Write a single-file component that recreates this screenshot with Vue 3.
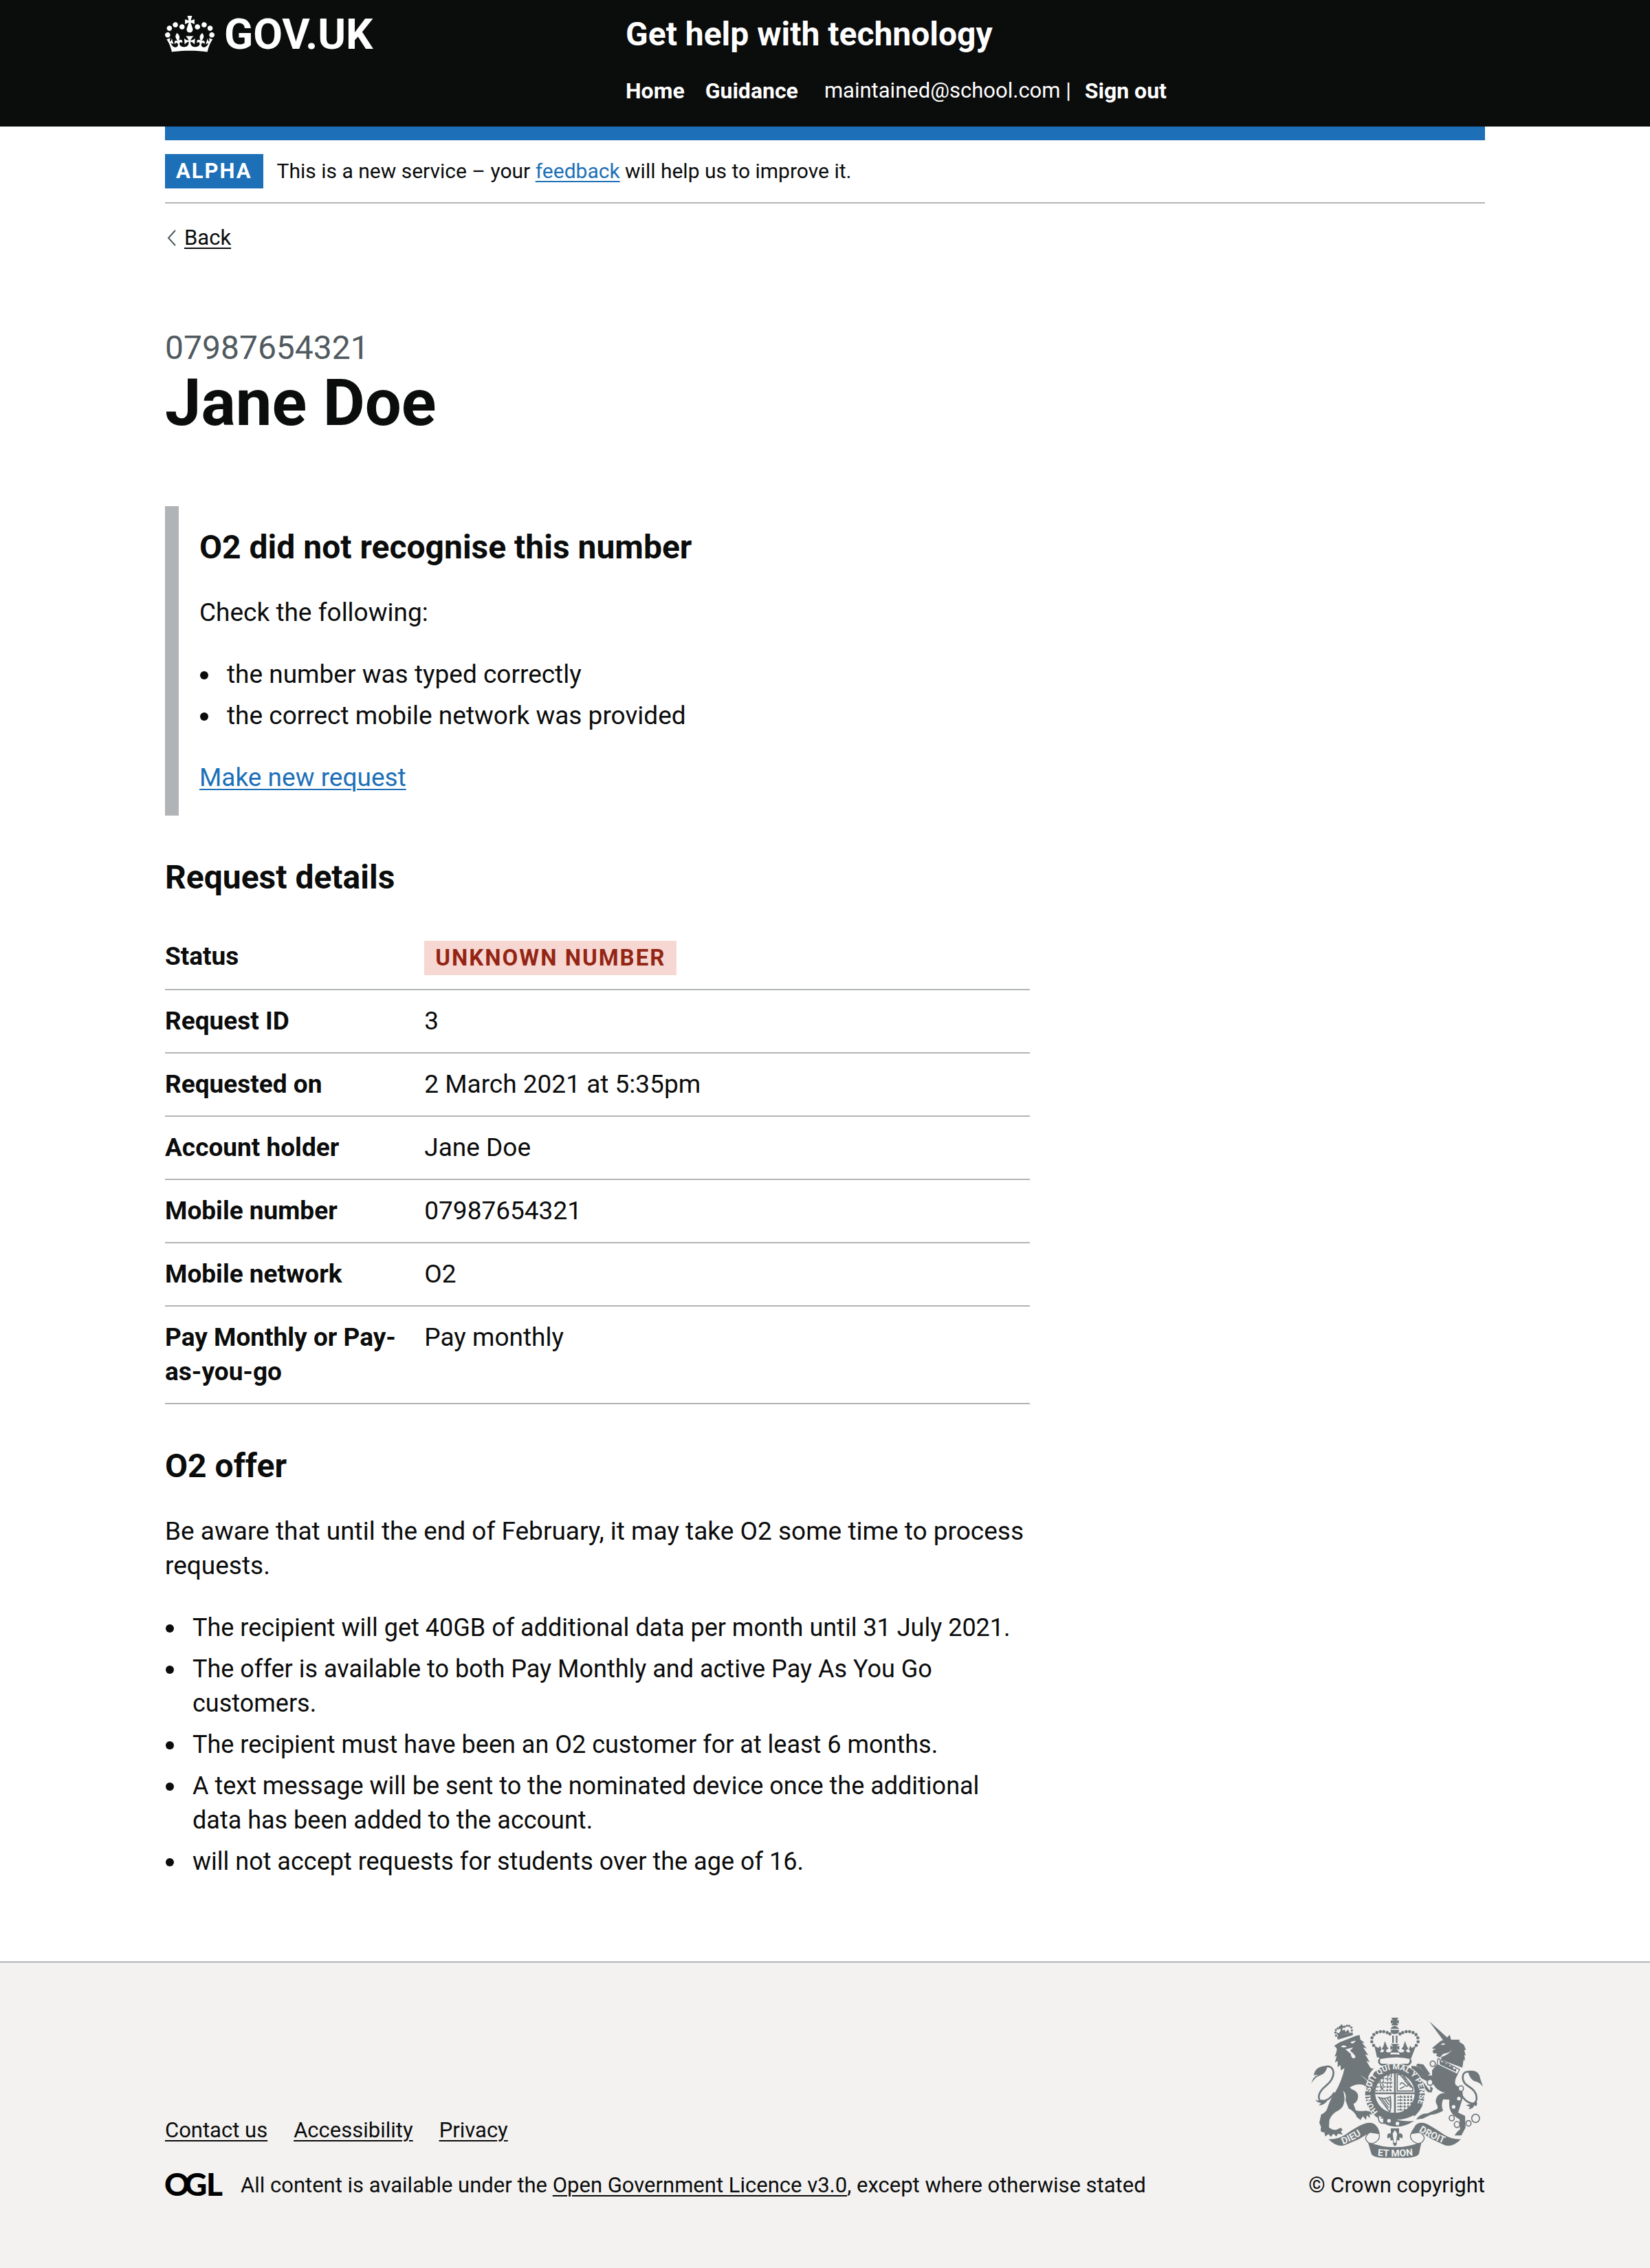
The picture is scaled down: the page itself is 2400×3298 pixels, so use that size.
<script setup>
const details = [
  { key: 'Status', value: 'Unknown number', tag: true },
  { key: 'Request ID', value: '3' },
  { key: 'Requested on', value: '2 March 2021 at 5:35pm' },
  { key: 'Account holder', value: 'Jane Doe' },
  { key: 'Mobile number', value: '07987654321' },
  { key: 'Mobile network', value: 'O2' },
  { key: 'Pay Monthly or Pay-as-you-go', value: 'Pay monthly' },
]
const checks = ['the number was typed correctly', 'the correct mobile network was provided']
const offer = [
  'The recipient will get 40GB of additional data per month until 31 July 2021.',
  'The offer is available to both Pay Monthly and active Pay As You Go customers.',
  'The recipient must have been an O2 customer for at least 6 months.',
  'A text message will be sent to the nominated device once the additional data has been added to the account.',
  'will not accept requests for students over the age of 16.',
]
const footerLinks = ['Contact us', 'Accessibility', 'Privacy']

// Crest details: pearls on the crowns and links of the chain
const arch = [
  [405, 223], [397, 207], [398, 190], [406, 176], [419, 167], [434, 163], [449, 163], [464, 167], [476, 173],
]
const pearls = [
  [241, 180], [238, 167], [240, 156], [248, 149], [257, 147], [279, 141], [289, 137], [299, 138], [308, 145], [310, 158],
]
const chain = [[663, 303, 12], [651, 384, 13], [786, 411, 12], [746, 540, 12], [769, 568, 13], [819, 563, 12], [850, 541, 18]]
</script>

<template>
  <div class="page">
    <header class="header">
      <div class="container header-inner">
        <a class="logo" href="#" aria-label="GOV.UK">
          <svg class="crown" viewBox="0 0 132 97" aria-hidden="true">
            <path fill="currentColor" d="M25 30.2c3.5 1.5 7.7-.2 9.1-3.7 1.5-3.6-.2-7.8-3.9-9.2-3.6-1.4-7.6.3-9.1 3.9-1.4 3.5.3 7.5 3.9 9zM9 39.5c3.6 1.5 7.8-.2 9.2-3.7 1.5-3.6-.2-7.8-3.9-9.1-3.6-1.5-7.6.2-9.1 3.8-1.4 3.5.3 7.5 3.8 9zM4.4 57.2c3.5 1.5 7.7-.2 9.1-3.8 1.5-3.6-.2-7.7-3.9-9.1-3.5-1.5-7.6.3-9.1 3.8-1.4 3.5.3 7.6 3.9 9.1zm38.3-21.4c3.5 1.5 7.7-.2 9.1-3.8 1.5-3.6-.2-7.7-3.9-9.1-3.6-1.5-7.6.3-9.1 3.8-1.3 3.6.4 7.7 3.9 9.1zm64.4-5.6c-3.6 1.5-7.8-.2-9.1-3.7-1.5-3.6.2-7.8 3.8-9.2 3.6-1.4 7.7.3 9.2 3.9 1.3 3.5-.4 7.5-3.9 9zm15.9 9.3c-3.6 1.5-7.7-.2-9.1-3.7-1.5-3.6.2-7.8 3.7-9.1 3.6-1.5 7.7.2 9.2 3.8 1.5 3.5-.3 7.5-3.8 9zm4.7 17.7c-3.6 1.5-7.8-.2-9.2-3.8-1.5-3.6.2-7.7 3.9-9.1 3.6-1.5 7.7.3 9.2 3.8 1.3 3.5-.4 7.6-3.9 9.1zM89.3 35.8c-3.6 1.5-7.8-.2-9.2-3.8-1.4-3.6.2-7.7 3.9-9.1 3.6-1.5 7.7.3 9.2 3.8 1.4 3.6-.3 7.7-3.9 9.1zM69.7 17.7l8.9 4.7V9.3l-8.9 2.8c-.2-.3-.5-.6-.9-.9L72.4 0H59.6l3.5 11.2c-.3.3-.6.5-.9.9l-8.8-2.8v13.1l8.8-4.7c.3.3.6.7.9.9l-5 15.4v.1c-.2.8-.4 1.6-.4 2.4 0 4.1 3.1 7.5 7 8.1h.2c.3 0 .7.1 1 .1.4 0 .7 0 1-.1h.2c4-.6 7.1-4.1 7.1-8.1 0-.8-.1-1.7-.4-2.4V34l-5.1-15.4c.4-.2.7-.6 1-.9zM66 92.8c16.9 0 32.8 1.1 47.1 3.2 4-16.9 8.9-26.7 14-33.5l-9.6-3.4c1 4.9 1.1 7.2 0 10.2-1.5-1.4-3-4.3-4.2-8.7L108.6 76c2.8-2 5-3.2 7.5-3.3-4.4 9.4-10 11.9-13.6 11.2-4.3-.8-6.3-4.6-5.6-7.9 1-4.7 5.7-5.9 8-.5 4.3-8.7-3-11.4-7.6-8.8 7.1-7.2 7.9-13.5 2.1-21.1-8 6.1-8.1 12.3-4.5 20.8-4.7-5.4-12.1-2.5-9.5 6.2 3.4-5.2 7.9-2 7.2 3.1-.6 4.3-6.4 7.8-13.5 7.2-10.3-.9-10.9-8-11.2-13.8 2.5-.5 7.1 1.8 11 7.3L80.2 60c-4.1 4.4-8 5.3-12.3 5.4 1.4-4.4 8-11.6 8-11.6H55.5s6.4 7.2 7.9 11.6c-4.2-.1-8-1-12.3-5.4l1.4 16.4c3.9-5.5 8.5-7.7 10.9-7.3-.3 5.8-.9 12.8-11.1 13.8-7.2.6-12.9-2.9-13.5-7.2-.7-5 3.8-8.3 7.1-3.1 2.7-8.7-4.6-11.6-9.4-6.2 3.7-8.5 3.6-14.7-4.6-20.8-5.8 7.6-5 13.9 2.2 21.1-4.7-2.6-11.9.1-7.7 8.8 2.3-5.5 7.1-4.2 8.1.5.7 3.3-1.3 7.1-5.7 7.9-3.5.7-9-1.8-13.5-11.2 2.5.1 4.7 1.3 7.5 3.3l-4.7-15.4c-1.2 4.4-2.7 7.2-4.3 8.7-1.1-3-.9-5.3 0-10.2l-9.5 3.4c5 6.9 9.9 16.7 14 33.5 14.8-2.1 30.8-3.2 47.7-3.2z"/>
          </svg>
          <span>GOV.UK</span>
        </a>
        <div class="header-content">
          <a class="service" href="#">Get help with technology</a>
          <nav class="nav" aria-label="Account">
            <a href="#">Home</a>
            <a href="#">Guidance</a>
            <span class="account"><span>maintained@school.com |</span><a href="#">Sign out</a></span>
          </nav>
        </div>
      </div>
    </header>

    <div class="container">
      <div class="phase">
        <strong class="tag">Alpha</strong>
        <span>This is a new service – your <a class="link" href="#">feedback</a> will help us to improve it.</span>
      </div>
      <a class="back" href="#">
        <svg class="chevron" viewBox="0 0 14 24" aria-hidden="true"><path d="M13 1 3 12l10 11" fill="none" stroke="#505a5f" stroke-width="2"/></svg>
        <span>Back</span>
      </a>

      <main class="main">
        <h1><span class="caption">07987654321</span>Jane Doe</h1>

        <div class="inset">
          <h2>O2 did not recognise this number</h2>
          <p>Check the following:</p>
          <ul>
            <li v-for="c in checks" :key="c"><span>{{ c }}</span></li>
          </ul>
          <p><a class="link" href="#">Make new request</a></p>
        </div>

        <h2>Request details</h2>
        <dl class="summary">
          <div v-for="d in details" :key="d.key" class="row">
            <dt>{{ d.key }}</dt>
            <dd><strong v-if="d.tag" class="tag tag-red">{{ d.value }}</strong><template v-else>{{ d.value }}</template></dd>
          </div>
        </dl>

        <h2>O2 offer</h2>
        <p>Be aware that until the end of February, it may take O2 some time to process requests.</p>
        <ul class="offer">
          <li v-for="o in offer" :key="o"><span>{{ o }}</span></li>
        </ul>
      </main>
    </div>

    <footer class="footer">
      <div class="container footer-inner">
        <div class="footer-meta">
          <nav class="footer-links" aria-label="Support links">
            <a v-for="l in footerLinks" :key="l" href="#">{{ l }}</a>
          </nav>
          <div class="licence">
            <svg class="ogl" viewBox="0 0 84 40" aria-hidden="true"><text x="-1 28 60" y="35">OGL</text></svg>
            <span>All content is available under the <a href="#">Open Government Licence v3.0</a>, except where otherwise stated</span>
          </div>
        </div>
        <a class="copyright" href="#">
          <svg class="crest" viewBox="132 102 750 612" aria-hidden="true">
            <defs>
              <path id="garter" d="M424 512A107 107 0 1 1 540 533" />
              <path id="scroll-left" d="M272 655Q322 636 378 596" />
              <path id="scroll-mid" d="M408 703Q498 713 590 701" />
              <path id="scroll-right" d="M602 597Q656 632 748 664" />
            </defs>
            <g class="ink">
              <!-- royal crown -->
              <path d="M482 102h31l-7 13 9-3v16l-9-4 7 12h-31l7-12-9 4v-16l9 3zM497 137q14 4 19 14h-38q5-10 19-14zM478 155h39l-4 14q-16 9-31 0zM486 180h7v32h-7zM502 180h7v32h-7zM480 217h36l-12 12 13-5v18l-13-6q8 8 13 18h-39q4-12 13-18l-13 6v-18l13 5z" />
              <path d="M408 224l18 10 8-10 5 18q-10 10-2 11 14 1 13-10-8 0-10-8 8-4 9-14l5-17 7 17q2 10 9 14-3 8-11 8 0 16 21 8l-2 14h40l-2-14q22 8 23-8-10 0-12-8 8-4 9-14l6-17 6 17q2 10 9 14-2 8-10 8 0 12 14 10 8-2-2-11l5-18 8 10 18-10-20 52q-70-22-150 0zM426 273q72-22 146 0l-6 10q-66-16-134 0z" />
              <g v-for="([x, y], i) in arch" :key="i">
                <circle :cx="x" :cy="y" r="7" /><circle :cx="996 - x" :cy="y" r="7" />
              </g>
              <!-- lion crown -->
              <path d="M245 184l68-18 2 12-66 20zM261 132h8v6h7v8h-7v12l9-4 5 10 10-10 8 14-50 14-11-18 14 6 7-12v-12h-7v-8h7z" />
              <circle v-for="([x, y], i) in pearls" :key="'l' + i" :cx="x" :cy="y" r="5" />
              <!-- lion -->
              <path d="M233 224l24-15 72-28 15-3 3 20 18 13-10 1 20 24-16-4 23 34-14-4 20 34-15-6 18 30q10 8 18 0-22 22-28 42l25 35 26 30-5 30-8-22-3 20-12-28-6 15-7-24-8 14q-8-24-20-36-30-10-62 10l8 8q24 8 28 26 2 28-20 38l10 28q20 6 44 2l24 4 2 14-10-4 2 18-14-12-3 20-14-16-10 16-16-12q-10-26-36-38l-14-36q6-26-10-42Q290 480 255 505Q222 520 212 548L210 580Q222 592 240 592L262 582L270 592L262 598L270 612L250 608L242 620L230 608L218 622L208 610L194 620L190 602Q168 604 176 580L168 560L176 524Q196 516 202 500Q216 455 236 430Q266 380 278 322L262 332L260 308L248 318L248 290L236 298L244 268L234 272Q246 250 244 236Z" />
              <path class="tail" d="M190 318q34-12 40 22 0 34-32 58-30 24-32 46-2 24 18 22 32-6 50-38" />
              <path d="M133 390q6-30 30-38-22-2-20 4 4-36 38-42l22-2q-4 34-32 42-24 8-38 36z" />
              <path d="M150 458q10 10 30 2l22 6q-16 20-36 18l10-10q-20-2-26-16z" />
              <!-- unicorn -->
              <path d="M647 117l82 74-8 10-14-2zM661 234l36-30 22-8 18-20 6 22 26 0 12 0-3 8 20 14 4 8 6 16-8-2 7 26-6-4 3 26-6-6-6 36-60-22-32-12 0-12q40-14 52-40-10 22-44 26l-14 16-16-8 4-10-16 0-4-12 14-8-14 0z" />
              <path d="M680 306l92 44q-16 26-10 44l26 20q10 14 4 44-10 32-18 58l30 14 2 52-18 34-30 0q14-22 24-26l-2-44q-30-16-40-38-8-22-4-48l-28-2q-10 26 0 50-20 14-54 18l-34 16-30 4q20-28 50-26l34-16q16-4 8-20-14-22 4-42 8-10 32-12-34-6-52-36l-42-22-20-10-24-12 8-12-18 0 0-26q14 0 34 6l34 36 22 0 0-22z" />
              <path d="M608 320l-18-8 6-10 26 4 30 42-16 8zM612 370l40 52-8 6-26-26-14-32zM652 400l12 10-6 18-20-2 14-6z" />
              <path class="tail" d="M836 340q-40-10-42 20-2 26 26 42 38 22 34 56-4 20-20 18-26-4-44-34" />
              <path d="M818 342q-8-10 18-9 30 2 34 34l12 36q-16-20-30-22-24-4-34-39z" />
              <path d="M808 484q26-4 46-16 6 10-2 20l-8-4q-4 16-26 18l8-10z" />
              <!-- supporters' chain -->
              <g class="ring">
                <ellipse v-for="([x, y, r], i) in chain" :key="'c' + i" :cx="x" :cy="y" :rx="r - 1" :ry="r" />
              </g>
              <!-- garter and shield -->
              <path d="M432 283q-10 14 6 24h118q16-10 8-24" class="tail" />
              <circle cx="498" cy="434" r="133" fill="#f3f2f1" />
              <circle cx="498" cy="434" r="108" class="band" />
              <circle cx="498" cy="431" r="86" fill="#f3f2f1" />
              <path d="M494 326h8v214h-8zM412 428h174v8H412z" />
              <path class="thin" d="M425 368h60M421 386h66M416 404h70M414 420h72M436 352h48M450 340h36M430 360l10 58M450 346l-6 74M468 338l-4 84M484 338l-8 84" stroke-dasharray="11 4" />
              <path class="thin" d="M508 350h24l44 58v14h-68zM520 350l50 58M520 394q8-16 20 0t20-4M530 360q14-6 12 18l18 20M520 412l20-10" />
              <path class="thin" d="M428 450l46 62q10-10 4-66-20 14-50 4zM440 454l30 42M450 452l22 30M462 450l12 18M478 446v66" />
              <path class="thin" d="M508 448h62M508 462h70M508 476h64M508 490h56M508 504h42M522 442v70M540 442v70M556 442v60M570 442v40" stroke-dasharray="10 4" />
            </g>
            <path d="M424 528q74 40 156 0l10 26q-92 58-170 8z" fill="#f3f2f1" />
            <path d="M448 528q70 32 134 24-70 46-136 10z" class="ink" />
            <path d="M456 520q-32-10-30 20t34 20M436 540h22" class="thin" />
            <g fill="#f3f2f1"><circle cx="472" cy="552" r="8" /><circle cx="509" cy="564" r="8" /><circle cx="777" cy="455" r="8" /><circle cx="754" cy="491" r="8" /></g>
            <!-- lion and unicorn highlights -->
            <path d="M262 228q12-10 26 0-12 8-26 0zM304 208l22-6q-4 14-18 12zM282 240l34-8-14 14q20 16 24 26-2 10-12 6-8-4-8-18zM698 218q10-8 20-2-8 8-20 2zM346 352q40 22 62 62-26-36-62-62z" fill="#f3f2f1" />
            <path d="M686 280l94 48-10 20-88-42z" class="collar" />
            <path d="M692 286l14 12 6-8 10 16 8-8 8 18 10-6 6 18 12-4-2 14-70-32z" class="ink" />
            <!-- scrolls -->
            <g class="ink">
              <path d="M208 632q40 2 74-20 50-36 84-48 40-14 58 20 6 12 8 26l-42-8-50 30-60 26q-34 12-72-26z" />
              <path d="M786 632q-40 2-74-20-46-32-78-48-40-14-54 20-10 12-14 26l44-8 50 30 54 26q34 12 72-26z" />
              <path d="M380 644q118 46 234 0l-12 54q-14 14-50 15H442q-34-1-46-15z" />
            </g>
            <path class="curl" d="M388 602q-26 20-14 36 10 16 30 12 34-16 24-42zM608 602q26 20 14 36-10 16-30 12-34-16-24-42z" />
            <path class="ink" d="M480 585h36v22q20-4 14 22l-12-6 0 14-12 0 0 16q-8 18-16 0v-16l-12 0 0-14-12 6q-6-26 14-22z" />
            <path d="M498 592l10 16-6 40h-8l-6-40z" fill="#f3f2f1" />
            <g class="motto">
              <text><textPath href="#garter">HONI SOIT QUI MAL Y PENSE</textPath></text>
              <text class="big"><textPath href="#scroll-left">DIEU</textPath></text>
              <text class="big"><textPath href="#scroll-mid" startOffset="8%">ET MON</textPath></text>
              <text class="big"><textPath href="#scroll-right">DROIT</textPath></text>
            </g>
          </svg>
          <span>© Crown copyright</span>
        </a>
      </div>
    </footer>
  </div>
</template>

<style>
body { background: #fff; }
</style>

<style scoped>
.page {
  --ink: #0b0c0c;
  --line: #b1b4b6;
  --blue: #1d70b8;
  font-family: Roboto, "Liberation Sans", Arial, sans-serif;
  font-size: 37px;
  line-height: 50px;
  color: var(--ink);
}
.container { margin: 0 10%; }
a { color: inherit; text-decoration-thickness: 2px; text-underline-offset: 4px; }
.link { color: var(--blue); }

.header { background: var(--ink); color: #fff; }
.header a { text-decoration: none; }
.header-inner { display: flex; padding: 20px 0 32px; }
.header + .container { border-top: 20px solid var(--blue); }
.logo { width: 670px; display: flex; align-items: flex-start; gap: 14px; font-size: 62px; font-weight: 700; line-height: 60px; }
.crown { width: 72px; height: 53px; margin-top: 3px; }
.service { display: block; font-size: 48px; font-weight: 700; line-height: 60px; }
.nav { display: flex; gap: 30px; margin-top: 32px; font-size: 31px; line-height: 40px; }
.nav a { font-size: 32px; font-weight: 700; }
.account { display: flex; gap: 20px; margin-left: 8px; }

.phase { display: flex; align-items: center; gap: 20px; padding: 20px 0; border-bottom: 2px solid var(--line); font-size: 30px; line-height: 50px; }
.tag {
  display: inline-block;
  padding: 0 16px;
  background: var(--blue);
  color: #fff;
  font-size: 31px;
  font-weight: 700;
  line-height: 50px;
  letter-spacing: 2px;
  text-transform: uppercase;
}
.tag-red { background: #f6d7d2; color: #942514; font-size: 33px; }

.back { display: flex; align-items: center; width: max-content; gap: 12px; margin: 30px 0; padding-left: 2px; font-size: 31px; line-height: 40px; text-decoration: none; }
.back span { text-decoration: underline; text-decoration-thickness: 2px; text-underline-offset: 4px; }
.chevron { width: 14px; height: 24px; }

.main { width: 65.5%; padding: 80px 0; }
h1, h2, p, ul, dl, dd { margin: 0; }
h1 { margin-bottom: 100px; font-size: 94px; line-height: 100px; }
.caption { display: block; color: #505a5f; font-size: 48px; font-weight: 400; line-height: 60px; }
h2 { margin-bottom: 40px; font-size: 48px; line-height: 60px; }
p { margin-bottom: 40px; }
ul { margin-bottom: 40px; padding: 0; list-style: none; }
.offer { font-size: 36px; }
li { display: flex; }
li::before { content: ""; flex: none; width: 12px; height: 12px; margin: 20px 27px 0 1px; border-radius: 50%; background: var(--ink); }
li + li { margin-top: 10px; }
.inset { margin-bottom: 60px; padding: 30px; border-left: 20px solid var(--line); }
.inset > :last-child { margin-bottom: 0; }
.summary { margin-bottom: 60px; }
.row { display: flex; padding: 20px 0; border-bottom: 2px solid var(--line); }
.row dt { width: 30%; box-sizing: border-box; padding-right: 30px; font-weight: 700; }
.row dd { flex: 1; }
.row .tag { margin-top: 2px; vertical-align: top; }

.footer { border-top: 2px solid var(--line); background: #f3f2f1; font-size: 31px; line-height: 40px; }
.footer-inner { display: flex; justify-content: space-between; align-items: flex-end; padding: 80px 0 100px; }
.footer-links { display: flex; gap: 38px; margin-bottom: 40px; }
.licence { display: flex; align-items: center; gap: 26px; }
.ogl { width: 84px; height: 40px; overflow: visible; }
.ogl text { font-family: Lato, Roboto, sans-serif; font-size: 46px; font-weight: 900; }
.copyright { display: flex; flex-direction: column; align-items: center; gap: 20px; text-decoration: none; }
.crest { width: 250px; height: 204px; overflow: visible; }
.ink { fill: #6f777b; }
.tail { fill: none; stroke: #6f777b; stroke-width: 8; }
.ring { fill: #f3f2f1; stroke: #6f777b; stroke-width: 5; }
.band { stroke: #6f777b; stroke-width: 44; }
.thin { fill: none; stroke: #6f777b; stroke-width: 5; }
.collar, .curl { fill: #f3f2f1; stroke: #6f777b; stroke-width: 4; }
.motto { fill: #f3f2f1; font-size: 35px; font-weight: 700; }
.motto .big { font-size: 42px; }
</style>
